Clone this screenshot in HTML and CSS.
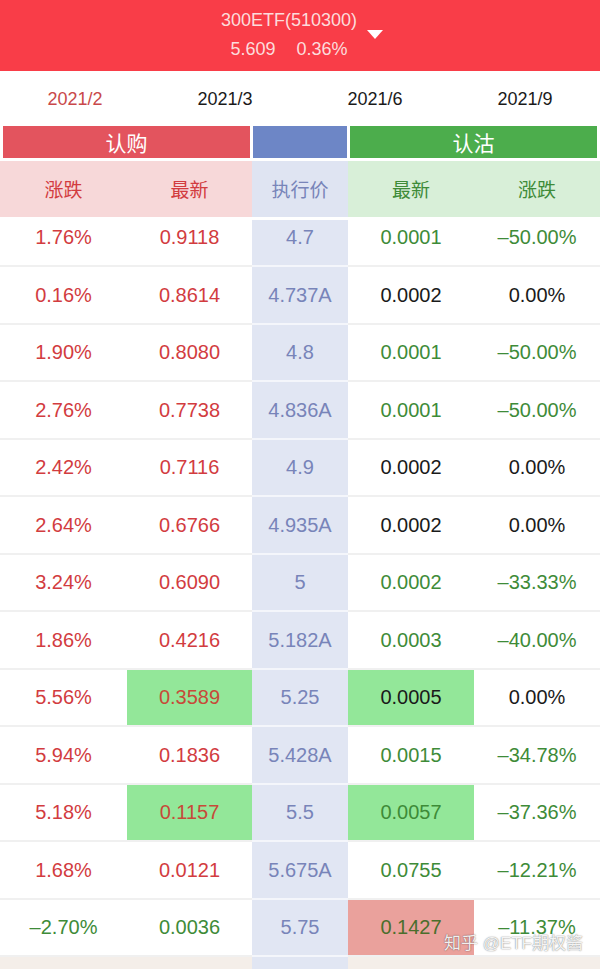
FILE: index.html
```html
<!DOCTYPE html>
<html lang="zh-CN">
<head>
<meta charset="utf-8">
<title>300ETF 期权</title>
<link rel="stylesheet" href="styles.css">
</head>
<body>
<div class="page">
  <header class="topbar">
    <div class="title-wrap">
      <div class="title-text">
        <div class="title">300ETF(510300)</div>
        <div class="quote"><span>5.609</span><span>0.36%</span></div>
      </div>
      <span class="caret"></span>
    </div>
  </header>

  <nav class="tabs">
    <span class="tab active">2021/2</span>
    <span class="tab">2021/3</span>
    <span class="tab">2021/6</span>
    <span class="tab">2021/9</span>
  </nav>

  <div class="sections">
    <div class="sec sec-call">认购</div>
    <div class="sec sec-strike"></div>
    <div class="sec sec-put">认沽</div>
  </div>

  <div class="colheads">
    <div class="ch ch-call">涨跌</div>
    <div class="ch ch-call">最新</div>
    <div class="ch ch-strike">执行价</div>
    <div class="ch ch-put">最新</div>
    <div class="ch ch-put">涨跌</div>
  </div>

  <div class="list">
    <div class="rows">
      <div class="row"><div class="c up">1.76%</div><div class="c up">0.9118</div><div class="c k">4.7</div><div class="c dn">0.0001</div><div class="c dn">–50.00%</div></div>
      <div class="row"><div class="c up">0.16%</div><div class="c up">0.8614</div><div class="c k">4.737A</div><div class="c eq">0.0002</div><div class="c eq">0.00%</div></div>
      <div class="row"><div class="c up">1.90%</div><div class="c up">0.8080</div><div class="c k">4.8</div><div class="c dn">0.0001</div><div class="c dn">–50.00%</div></div>
      <div class="row"><div class="c up">2.76%</div><div class="c up">0.7738</div><div class="c k">4.836A</div><div class="c dn">0.0001</div><div class="c dn">–50.00%</div></div>
      <div class="row"><div class="c up">2.42%</div><div class="c up">0.7116</div><div class="c k">4.9</div><div class="c eq">0.0002</div><div class="c eq">0.00%</div></div>
      <div class="row"><div class="c up">2.64%</div><div class="c up">0.6766</div><div class="c k">4.935A</div><div class="c eq">0.0002</div><div class="c eq">0.00%</div></div>
      <div class="row"><div class="c up">3.24%</div><div class="c up">0.6090</div><div class="c k">5</div><div class="c dn">0.0002</div><div class="c dn">–33.33%</div></div>
      <div class="row"><div class="c up">1.86%</div><div class="c up">0.4216</div><div class="c k">5.182A</div><div class="c dn">0.0003</div><div class="c dn">–40.00%</div></div>
      <div class="row"><div class="c up">5.56%</div><div class="c up hl-green">0.3589</div><div class="c k">5.25</div><div class="c eq hl-green">0.0005</div><div class="c eq">0.00%</div></div>
      <div class="row"><div class="c up">5.94%</div><div class="c up">0.1836</div><div class="c k">5.428A</div><div class="c dn">0.0015</div><div class="c dn">–34.78%</div></div>
      <div class="row"><div class="c up">5.18%</div><div class="c up hl-green">0.1157</div><div class="c k">5.5</div><div class="c dn hl-green">0.0057</div><div class="c dn">–37.36%</div></div>
      <div class="row"><div class="c up">1.68%</div><div class="c up">0.0121</div><div class="c k">5.675A</div><div class="c dn">0.0755</div><div class="c dn">–12.21%</div></div>
      <div class="row"><div class="c dn">–2.70%</div><div class="c dn">0.0036</div><div class="c k">5.75</div><div class="c dn hl-red">0.1427</div><div class="c dn">–11.37%</div></div>
      <div class="row row-next"><div class="c"></div><div class="c"></div><div class="c k"></div><div class="c"></div><div class="c"></div></div>
    </div>
  </div>

  <div class="watermark">知乎 @ETF期权酱</div>
</div>
</body>
</html>
```

FILE: styles.css
```css
html, body {
  margin: 0;
  padding: 0;
  background: #ffffff;
}

.page {
  position: relative;
  width: 600px;
  height: 969px;
  overflow: hidden;
  font-family: "Liberation Sans", "Noto Sans CJK SC", sans-serif;
  color: #1a1a1a;
}

/* top red bar */
.topbar {
  height: 71px;
  box-sizing: border-box;
  background: #f93d48;
  padding-top: 9px;
  display: flex;
  justify-content: center;
  align-items: flex-start;
}

.title-wrap {
  display: flex;
  align-items: center;
  gap: 10px;
  margin-left: 4px;
}

.title-text {
  display: flex;
  flex-direction: column;
  align-items: center;
  gap: 7px;
  color: #fcdcdc;
  font-size: 18px;
  line-height: 22px;
}

.quote {
  display: flex;
  gap: 21px;
}

.caret {
  width: 0;
  height: 0;
  border-left: 8px solid transparent;
  border-right: 8px solid transparent;
  border-top: 9px solid #ffffff;
}

/* expiry tabs */
.tabs {
  height: 55px;
  display: grid;
  grid-template-columns: repeat(4, 150px);
  align-items: center;
  justify-items: center;
  font-size: 18px;
  line-height: 22px;
  color: #1a1a1a;
}

.tab.active {
  color: #c9484a;
}

/* section bars */
.sections {
  display: grid;
  grid-template-columns: 247px 94px 247px;
  gap: 3px;
  padding: 0 3px;
  height: 32px;
}

.sec {
  display: flex;
  align-items: center;
  justify-content: center;
  color: #ffffff;
  font-family: "Noto Sans CJK SC", sans-serif;
  font-size: 21px;
  line-height: 32px;
}

.sec-call { background: #e3545e; }
.sec-strike { background: #6d86c6; }
.sec-put { background: #4cad4c; }

/* column headers */
.colheads {
  margin-top: 3px;
  height: 56px;
  display: grid;
  grid-template-columns: 127px 125px 96px 126px 126px;
}

.ch {
  display: flex;
  align-items: center;
  justify-content: center;
  font-family: "Noto Sans CJK SC", sans-serif;
  font-size: 19px;
  line-height: 24px;
}

.ch-call { background: #f7d8d9; color: #d23c3f; }
.ch-strike { background: #dfe4f2; color: #7884b9; }
.ch-put { background: #d8efd8; color: #3e8b38; }

/* data list (scrolled) */
.list {
  margin-top: 3px;
  height: 749px;
  overflow: hidden;
}

.rows {
  margin-top: -10.5px;
}

.row {
  display: grid;
  grid-template-columns: 127px 125px 96px 126px 126px;
  height: 57.5px;
}

.c {
  display: flex;
  align-items: center;
  justify-content: center;
  font-size: 20px;
  line-height: 24px;
  border-bottom: 2px solid #f0f0f0;
}

.c.up { color: #d23c3f; }
.c.dn { color: #3e8b38; }
.c.eq { color: #1a1a1a; }

.c.k {
  background: #e1e6f3;
  color: #7884b9;
  border-bottom-color: #f4f6fb;
}

.c.hl-green { background: #93e799; }
.c.up.hl-green { color: #c74a38; }
.c.hl-red { background: #eaa19c; color: #4b6e2c; }

.row-next .c {
  background: #f4eee9;
  border-bottom: none;
}

.row-next .c.k {
  background: #e1e6f3;
}

/* watermark overlay */
.watermark {
  position: absolute;
  right: 17px;
  bottom: 15px;
  font-family: "Liberation Sans", "Noto Sans CJK SC", sans-serif;
  font-size: 17px;
  line-height: 20px;
  color: rgba(255, 255, 255, 0.92);
  text-shadow: 0 0 1px rgba(0, 0, 0, 0.45), 0 0 2px rgba(0, 0, 0, 0.25);
}
```
